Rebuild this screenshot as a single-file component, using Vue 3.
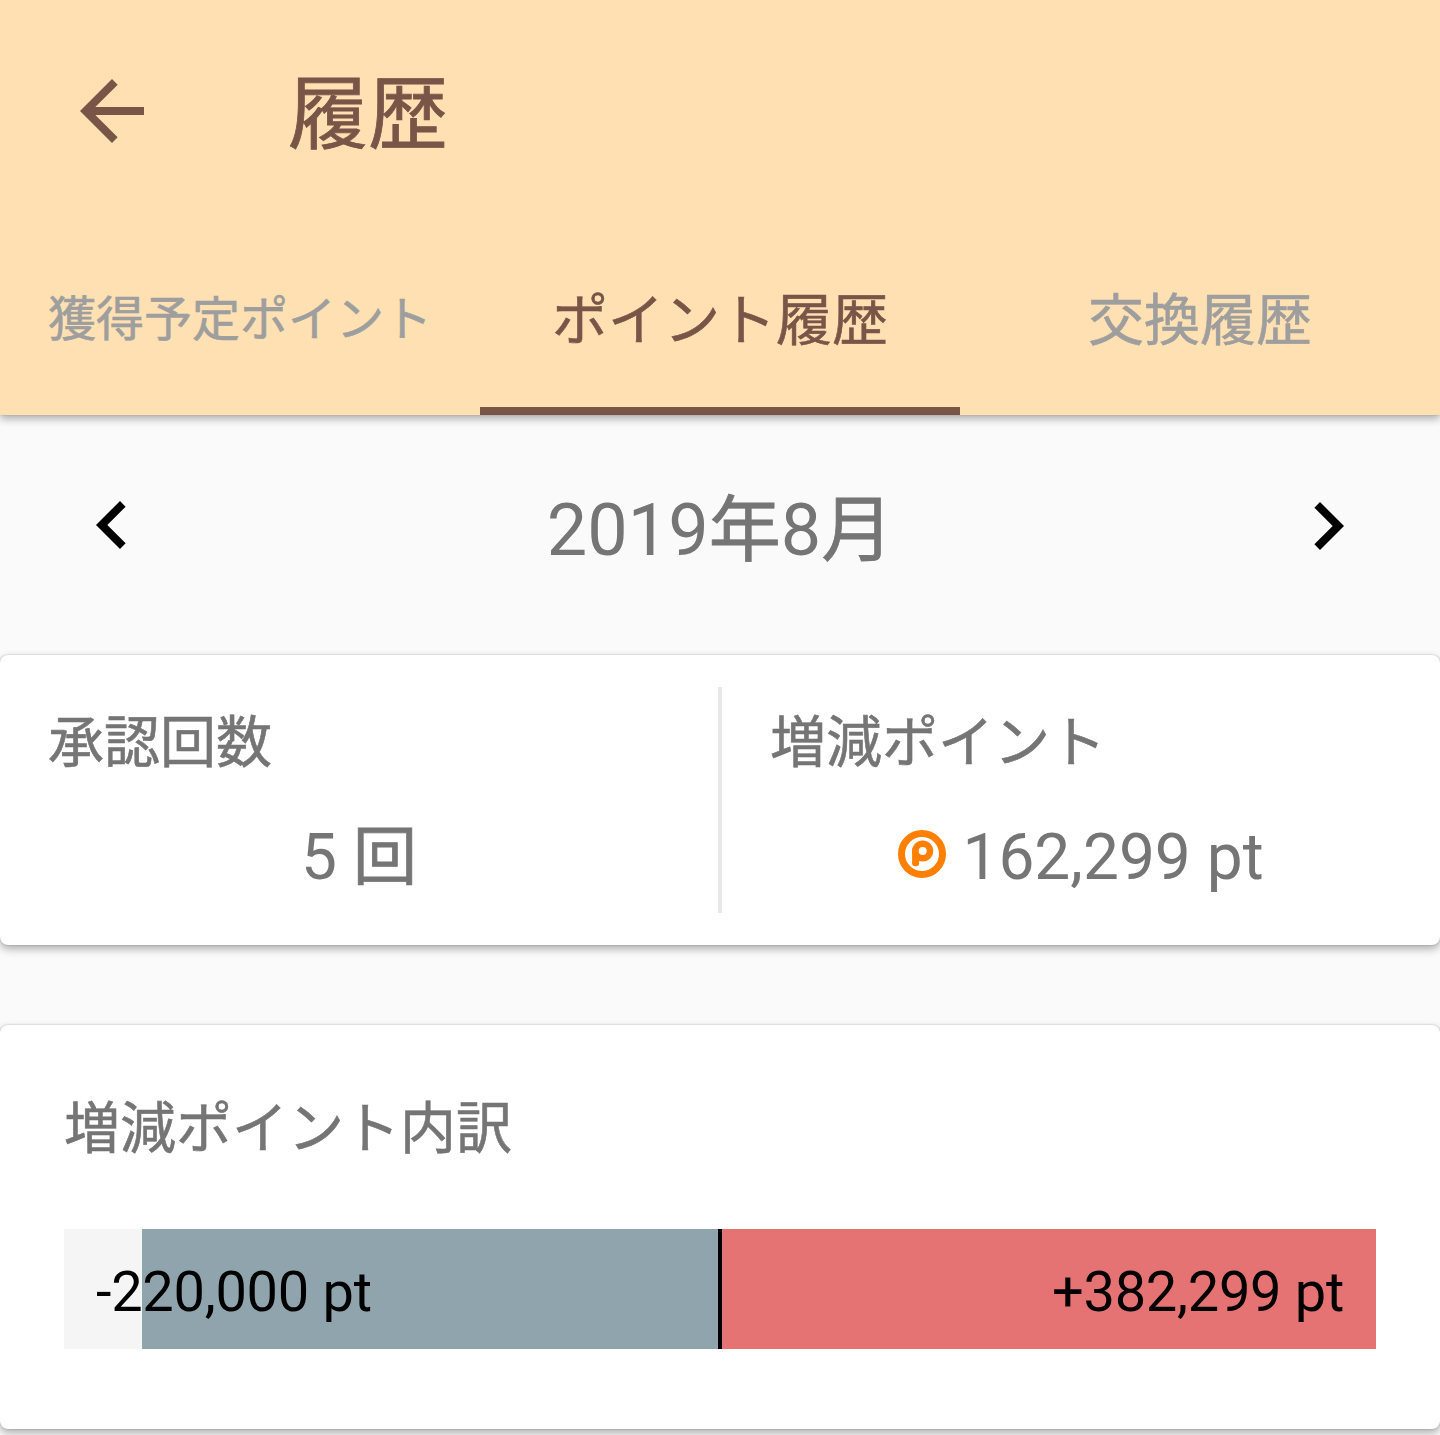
<template>
  <div class="history-page">
    <header class="app-bar">
      <div class="toolbar">
        <button class="icon-btn" aria-label="戻る">
          <svg viewBox="0 0 24 24" class="icon">
            <path d="M20 11H7.83l5.59-5.59L12 4l-8 8 8 8 1.41-1.41L7.83 13H20v-2z" />
          </svg>
        </button>
        <h1 class="title">履歴</h1>
      </div>
      <nav class="tabs">
        <button
          v-for="tab in tabs"
          :key="tab.id"
          class="tab"
          :class="{ active: tab.id === activeTab, small: tab.small }"
          @click="activeTab = tab.id"
        >
          <span class="tab-label">{{ tab.label }}</span>
        </button>
      </nav>
    </header>

    <div class="month-nav">
      <button class="icon-btn prev" aria-label="前の月" @click="moveMonth(-1)">
        <svg viewBox="0 0 24 24" class="icon">
          <path d="M15.41 7.41L14 6l-6 6 6 6 1.41-1.41L10.83 12z" />
        </svg>
      </button>
      <span class="month">{{ year }}<span class="unit">年</span>{{ month }}<span class="unit">月</span></span>
      <button class="icon-btn next" aria-label="次の月" @click="moveMonth(1)">
        <svg viewBox="0 0 24 24" class="icon">
          <path d="M10 6L8.59 7.41 13.17 12l-4.58 4.59L10 18l6-6z" />
        </svg>
      </button>
    </div>

    <section class="card summary">
      <div class="summary-item">
        <h2 class="label">承認回数</h2>
        <p class="value">
          <span>{{ approvedCount }} <span class="unit">回</span></span>
        </p>
      </div>
      <div class="divider"></div>
      <div class="summary-item">
        <h2 class="label">増減ポイント</h2>
        <p class="value">
          <svg viewBox="0 0 48 48" class="coin">
            <circle cx="24" cy="24" r="20.5" fill="none" stroke="#ff7f00" stroke-width="7" />
            <circle cx="24.7" cy="21" r="10.6" fill="#ff7f00" />
            <rect x="14.1" y="17" width="7" height="19.2" rx="3" fill="#ff7f00" />
            <circle cx="24.7" cy="21" r="4" fill="#fff" />
          </svg>
          <span>{{ format(plus - minus) }} pt</span>
        </p>
      </div>
    </section>

    <section class="card breakdown">
      <h2 class="label">増減ポイント内訳</h2>
      <div class="chart">
        <div class="side minus">
          <div class="fill" :style="{ width: barWidth(minus) }"></div>
          <span class="amount">-{{ format(minus) }} pt</span>
        </div>
        <div class="axis"></div>
        <div class="side plus">
          <div class="fill" :style="{ width: barWidth(plus) }"></div>
          <span class="amount">+{{ format(plus) }} pt</span>
        </div>
      </div>
    </section>
  </div>
</template>

<script setup>
import { ref } from 'vue';

const tabs = [
  { id: 'scheduled', label: '獲得予定ポイント', small: true },
  { id: 'points', label: 'ポイント履歴' },
  { id: 'exchange', label: '交換履歴' },
];

const activeTab = ref('points');
const year = ref(2019);
const month = ref(8);

const approvedCount = ref(5);
const plus = ref(382299);
const minus = ref(220000);

// points at which one side of the chart is full
const chartMax = 250000;

const format = (n) => n.toLocaleString('en-US');

const barWidth = (n) => `${Math.min(100, (n / chartMax) * 100)}%`;

const moveMonth = (step) => {
  const d = new Date(year.value, month.value - 1 + step, 1);
  year.value = d.getFullYear();
  month.value = d.getMonth() + 1;
};
</script>

<style>
body {
  margin: 0;
  background: #fafafa;
}
</style>

<style scoped>
.history-page {
  height: 1435px;
  overflow: hidden;
  background: #fafafa;
  color: #757575;
  font-family: Roboto, 'Noto Sans CJK JP', sans-serif;
}

button {
  padding: 0;
  border: none;
  background: none;
  font-family: inherit;
  color: inherit;
  cursor: pointer;
}

h1,
h2,
p {
  margin: 0;
  font-weight: 400;
}

.icon-btn {
  width: 96px;
  height: 96px;
  flex: none;
}

.icon {
  display: block;
  width: 96px;
  height: 96px;
  fill: currentColor;
}

.app-bar {
  display: flex;
  flex-direction: column;
  height: 415px;
  background: #ffe0b2;
  color: #795548;
  box-shadow: 0 4px 8px rgba(0, 0, 0, 0.3), 0 0 2px rgba(0, 0, 0, 0.15);
}

.toolbar {
  display: flex;
  align-items: center;
  gap: 128px;
  height: 222px;
  padding-left: 64px;
}

.title {
  padding-top: 8px;
  font-size: 80px;
  line-height: 96px;
  -webkit-text-stroke: 0.8px currentColor;
}

.tabs {
  display: grid;
  grid-template-columns: repeat(3, 1fr);
  flex: 1;
}

.tab {
  border-bottom: 8px solid transparent;
  font-size: 56px;
  line-height: 72px;
  color: #9e9e9e;
  white-space: nowrap;
  -webkit-text-stroke: 0.6px currentColor;
}

.tab.small {
  font-size: 48px;
}

.tab.active {
  color: #795548;
  border-bottom-color: #795548;
}

.tab-label {
  display: block;
  padding-top: 13px;
}

.tab.small .tab-label {
  padding-top: 11px;
}

.month-nav {
  display: flex;
  align-items: center;
  justify-content: space-between;
  height: 220px;
  padding: 0 64px;
  margin-bottom: 20px;
}

.month-nav .icon-btn {
  color: #000;
}

.month-nav .next {
  margin-top: 2px;
}

.month {
  padding-top: 12px;
  font-size: 72px;
  line-height: 84px;
}

.unit {
  -webkit-text-stroke: 0.8px currentColor;
}

.card {
  border-radius: 8px;
  background: #fff;
  box-shadow: 0 4px 8px rgba(0, 0, 0, 0.3), 0 0 2px rgba(0, 0, 0, 0.25);
}

.summary {
  display: flex;
  height: 226px;
  padding: 32px 0;
  margin-bottom: 80px;
}

.summary-item {
  flex: 1;
}

.divider {
  width: 4px;
  background: #e8e8e8;
}

.label {
  font-size: 56px;
  line-height: 66px;
  -webkit-text-stroke: 0.6px currentColor;
}

.summary .label {
  padding: 23px 48px 0;
}

.value {
  display: flex;
  align-items: center;
  justify-content: center;
  gap: 16px;
  margin-top: 44px;
  font-size: 64px;
  line-height: 76px;
}

.coin {
  width: 48px;
  height: 48px;
  margin-top: -8px;
}

.breakdown {
  height: 404px;
  padding: 0 64px;
  box-sizing: border-box;
}

.breakdown .label {
  padding-top: 71px;
  margin-bottom: 67px;
}

.chart {
  display: flex;
  height: 120px;
  color: #000;
}

.side {
  position: relative;
  display: flex;
  align-items: center;
  flex: 1;
  padding: 0 32px;
  background: #f5f5f5;
}

.plus {
  justify-content: flex-end;
}

.fill {
  position: absolute;
  top: 0;
  bottom: 0;
}

.minus .fill {
  right: 0;
  background: #90a4ae;
}

.plus .fill {
  left: 0;
  background: #e57373;
}

.axis {
  width: 4px;
  background: #000;
}

.amount {
  position: relative;
  padding-top: 6px;
  font-size: 56px;
  line-height: 66px;
  letter-spacing: -0.3px;
}
</style>
